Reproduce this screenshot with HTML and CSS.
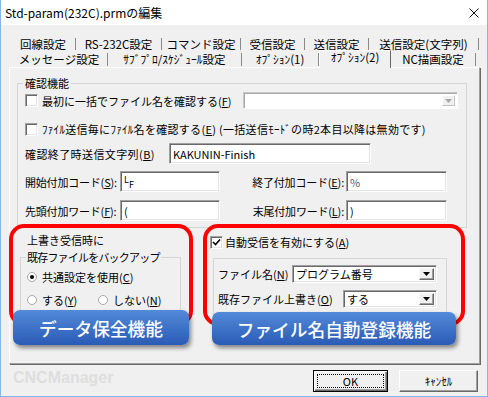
FILE: index.html
```html
<!DOCTYPE html>
<html lang="ja">
<head>
    <meta charset="UTF-8">
    <meta name="viewport" content="width=device-width, initial-scale=1.0">
    <title>Std-param(232C).prmの編集</title>
    <link rel="stylesheet" href="styles.css">
</head>
<body>
    <div class="window">
        <div class="titlebar">
            <span class="title">Std-param(232C).prmの編集</span>
            <svg class="close" width="10" height="10" viewBox="0 0 10 10"><path d="M0.5 0.5 L9.5 9.5 M9.5 0.5 L0.5 9.5" stroke="#111" stroke-width="1" fill="none"/></svg>
        </div>

        <div class="tabs">
            <div class="tab-row row1">
                <span class="tab">回線設定</span>
                <span class="tab">RS-232C設定</span>
                <span class="tab">コマンド設定</span>
                <span class="tab">受信設定</span>
                <span class="tab">送信設定</span>
                <span class="tab">送信設定(文字列)</span>
            </div>
            <div class="tab-row row2">
                <span class="tab">メッセージ設定</span>
                <span class="tab">ｻﾌﾞﾌﾟﾛ/ｽｹｼﾞｭｰﾙ設定</span>
                <span class="tab">ｵﾌﾟｼｮﾝ(1)</span>
                <span class="tab active">ｵﾌﾟｼｮﾝ(2)</span>
                <span class="tab">NC描画設定</span>
            </div>
        </div>

        <div class="panel">
            <fieldset class="group confirm">
                <legend>確認機能</legend>
                <div class="row r1">
                    <span class="check"></span>
                    <span class="text">最初に一括でファイル名を確認する(<u>F</u>)</span>
                    <div class="combo wide disabled">
                        <span class="combo-btn"><svg width="7" height="4" viewBox="0 0 7 4"><path d="M0 0 H7 L3.5 4 Z" fill="#a8a8a8"/></svg></span>
                    </div>
                </div>
                <div class="row r2">
                    <span class="check"></span>
                    <span class="text">ﾌｧｲﾙ送信毎にﾌｧｲﾙ名を確認する(<u>E</u>) (一括送信ﾓｰﾄﾞの時2本目以降は無効です)</span>
                </div>
                <div class="row r3">
                    <span class="label end-label">確認終了時送信文字列(<u>B</u>)</span>
                    <span class="field long">KAKUNIN-Finish</span>
                </div>
                <div class="pair-row r4">
                    <span class="label">開始付加コード(<u>S</u>):</span>
                    <span class="field"><span class="lf"><span class="lf-l">L</span><span class="lf-f">F</span></span></span>
                    <span class="label right">終了付加コード(<u>E</u>):</span>
                    <span class="field"><span class="pct">%</span></span>
                </div>
                <div class="pair-row r5">
                    <span class="label">先頭付加ワード(<u>F</u>):</span>
                    <span class="field">(</span>
                    <span class="label right">末尾付加ワード(<u>L</u>):</span>
                    <span class="field">)</span>
                </div>
            </fieldset>

            <div class="lower">
                <div class="callout left">
                    <div class="caption">上書き受信時に</div>
                    <fieldset class="group backup">
                        <legend>既存ファイルをバックアップ</legend>
                        <div class="radio-row first">
                            <span class="radio on"></span>
                            <span class="text">共通設定を使用(<u>C</u>)</span>
                        </div>
                        <div class="radio-row second">
                            <span class="radio-item">
                                <span class="radio"></span>
                                <span class="text">する(<u>Y</u>)</span>
                            </span>
                            <span class="radio-item">
                                <span class="radio"></span>
                                <span class="text">しない(<u>N</u>)</span>
                            </span>
                        </div>
                    </fieldset>
                    <div class="banner banner-left">データ保全機能</div>
                </div>

                <div class="callout right">
                    <div class="auto-row">
                        <span class="check checked"><svg width="9" height="8" viewBox="0 0 9 8"><path d="M1 4 L3.5 6.5 L8 1.5" stroke="#000" stroke-width="1.6" fill="none"/></svg></span>
                        <span class="text">自動受信を有効にする(<u>A</u>)</span>
                    </div>
                    <fieldset class="group auto">
                        <div class="combo-row">
                            <span class="text">ファイル名(<u>N</u>)</span>
                            <div class="combo name">
                                <span class="value">プログラム番号</span>
                                <span class="combo-btn"><svg width="7" height="4" viewBox="0 0 7 4"><path d="M0 0 H7 L3.5 4 Z" fill="#000"/></svg></span>
                            </div>
                        </div>
                        <div class="combo-row second">
                            <span class="text">既存ファイル上書き(<u>O</u>)</span>
                            <div class="combo over">
                                <span class="value">する</span>
                                <span class="combo-btn"><svg width="7" height="4" viewBox="0 0 7 4"><path d="M0 0 H7 L3.5 4 Z" fill="#000"/></svg></span>
                            </div>
                        </div>
                    </fieldset>
                    <div class="banner banner-right">ファイル名自動登録機能</div>
                </div>
            </div>
        </div>

        <div class="footer">
            <span class="brand">CNCManager</span>
            <button class="btn default" type="button">OK</button>
            <button class="btn" type="button">ｷｬﾝｾﾙ</button>
        </div>
    </div>
</body>
</html>
```

FILE: styles.css
```css
body {
    margin: 0;
    font-family: "Noto Sans CJK JP", "Noto Sans", sans-serif;
    font-size: 11px;
    line-height: 16px;
    color: #000;
    background: #fff;
}

.window {
    width: 488px;
    height: 397px;
    box-sizing: border-box;
    border: 1px solid #86b6e6;
    border-top: none;
    background: #f0f0f0;
    display: flex;
    flex-direction: column;
}

.titlebar {
    flex: none;
    height: 25px;
    background: #fff;
    display: flex;
    align-items: center;
    padding: 0 8px 0 4px;
    font-size: 12px;
}

.title {
    flex: 1;
}

/* tabs */
.tabs {
    flex: none;
    margin-top: 11px;
    padding-left: 10px;
    font-size: 11.5px;
}

.tab-row {
    display: grid;
}

.row1 {
    grid-template-columns: 65px 86px 79px 64px 64px 110px;
    height: 15px;
}

.row2 {
    grid-template-columns: 97px 134px 77px 72px 85px;
    height: 16px;
}

.tab {
    margin: 2px 0 1px;
    border-right: 1px solid #8a8a8a;
    text-align: center;
    white-space: nowrap;
    line-height: 12px;
}

.row2 .tab {
    line-height: 13px;
}

.row2 .tab.active {
    margin: -1px 0 -1px;
    background: #f0f0f0;
    border-left: 1px solid #fff;
    border-top: 1px solid #fff;
    border-right: 1px solid #696969;
    position: relative;
    z-index: 1;
    line-height: 13px;
}

/* panel */
.panel {
    flex: none;
    width: 471px;
    height: 297px;
    box-sizing: border-box;
    margin-left: 8px;
    border: 1px solid;
    border-color: #fff #a0a0a0 #a0a0a0 #fff;
    box-shadow: 1px 1px 0 #696969;
    padding: 7px 0 0 7px;
}

.group {
    margin: 0;
    min-width: 0;
    box-sizing: border-box;
    border: 1px solid #d5d5d5;
}

.group legend {
    padding: 0 2px;
    line-height: 16px;
    white-space: nowrap;
}

.confirm {
    width: 450px;
    padding: 0 8px 6px 7px;
}

.confirm legend {
    margin-left: -2px;
}

.row {
    display: flex;
    align-items: center;
}

.r1 {
    margin-top: 1px;
    height: 17px;
}

.r2 {
    margin-top: 11px;
    height: 18px;
}

.r2 .text {
    letter-spacing: 0.3px;
}

.r3 {
    margin-top: 5px;
    height: 21px;
}

.check {
    flex: none;
    width: 13px;
    height: 13px;
    box-sizing: border-box;
    background: #fff;
    border: 1px solid;
    border-color: #a0a0a0 #fff #fff #a0a0a0;
    box-shadow: inset 1px 1px 0 #696969, inset -1px -1px 0 #e3e3e3;
    display: flex;
    align-items: center;
    justify-content: center;
}

.row .text {
    margin-left: 4px;
    white-space: nowrap;
}

.end-label {
    width: 144px;
    letter-spacing: 0.4px;
}

.field {
    height: 21px;
    box-sizing: border-box;
    background: #fff;
    border: 1px solid;
    border-color: #a0a0a0 #fff #fff #a0a0a0;
    box-shadow: inset 1px 1px 0 #696969, inset -1px -1px 0 #e3e3e3;
    padding-left: 3px;
    display: flex;
    align-items: center;
    white-space: nowrap;
}

.long {
    width: 202px;
}

.pair-row {
    display: grid;
    grid-template-columns: 95px 100px 1fr 101px;
    align-items: center;
    padding-right: 11px;
    height: 21px;
}

.r4 {
    margin-top: 7px;
}

.r5 {
    margin-top: 8px;
}

.label {
    white-space: nowrap;
}

.pair-row .label {
    letter-spacing: -0.2px;
}

.label.right {
    justify-self: end;
    margin-right: 2px;
}

.lf {
    display: inline-flex;
    font-size: 9px;
    line-height: 9px;
    height: 14px;
}

.lf-l {
    align-self: flex-start;
}

.lf-f {
    align-self: flex-end;
}

.pct {
    color: #4a5a78;
}

/* combo boxes */
.combo {
    flex: none;
    box-sizing: border-box;
    background: #fff;
    border: 1px solid;
    border-color: #a0a0a0 #fff #fff #a0a0a0;
    box-shadow: inset 1px 1px 0 #696969, inset -1px -1px 0 #e3e3e3;
    display: flex;
    align-items: center;
    padding: 2px 2px 2px 3px;
}

.combo.wide {
    width: 215px;
    height: 17px;
    margin-left: auto;
}

.combo.disabled {
    border-color: #c8c8c8 #fff #fff #c8c8c8;
    box-shadow: inset 1px 1px 0 #a8a8a8;
}

.combo .value {
    flex: 1;
    white-space: nowrap;
}

.combo-btn {
    margin-left: auto;
    width: 15px;
    height: 100%;
    box-sizing: border-box;
    background: #f0f0f0;
    border: 1px solid;
    border-color: #f8f8f8 #696969 #696969 #f8f8f8;
    box-shadow: inset -1px -1px 0 #a0a0a0;
    display: flex;
    align-items: center;
    justify-content: center;
}

.disabled .combo-btn {
    width: 13px;
    border-color: #fff #c0c0c0 #c0c0c0 #fff;
    box-shadow: none;
}

/* annotated area */
.lower {
    display: flex;
    gap: 10px;
    margin: -4px 0 0 -8px;
}

.callout {
    position: relative;
    height: 102px;
    box-sizing: border-box;
    border: 4px solid #ff0000;
    border-radius: 15px;
}

.callout.left {
    width: 184px;
    padding: 4px 0 0 7px;
}

.callout.right {
    width: 262px;
    padding: 6px 0 0 3px;
}

.caption {
    padding-left: 7px;
}

.backup {
    width: 161px;
    height: 70px;
    margin-top: 1px;
    padding: 0 5px;
}

.backup legend {
    padding: 0 1px;
    letter-spacing: -0.8px;
}

.radio-row {
    display: flex;
    align-items: center;
    height: 16px;
    padding-left: 1px;
}

.radio-row.first {
    margin-top: 4px;
}

.radio-row.second {
    margin-top: 7px;
}

.radio-item {
    display: flex;
    align-items: center;
}

.radio-item:first-child {
    width: 71px;
}

.radio {
    flex: none;
    width: 10px;
    height: 10px;
    box-sizing: border-box;
    border-radius: 50%;
    background: #fff;
    border: 1px solid #a8a8a8;
    display: flex;
    align-items: center;
    justify-content: center;
}

.radio.on::after {
    content: "";
    width: 4px;
    height: 4px;
    border-radius: 50%;
    background: #000;
}

.radio-row .text {
    margin-left: 5px;
    white-space: nowrap;
}

.auto-row {
    display: flex;
    align-items: center;
    height: 16px;
}

.auto-row .text {
    margin-left: 2px;
}

.auto {
    width: 234px;
    height: 60px;
    margin: 8px 0 0 3px;
    padding: 6px 9px 0 4px;
}

.combo-row {
    display: flex;
    align-items: center;
    justify-content: space-between;
    height: 18px;
}

.combo-row.second {
    margin-top: 7px;
}

.combo-row .combo {
    height: 18px;
}

.combo.name {
    width: 145px;
}

.combo.over {
    width: 94px;
}

.banner {
    position: absolute;
    display: flex;
    align-items: center;
    justify-content: center;
    color: #fff;
    font-size: 17.7px;
    font-weight: 500;
    border-radius: 7px;
    background: linear-gradient(#538ad9, #2a5bb6);
    box-shadow: 2px 3px 4px rgba(0, 0, 0, 0.45);
    white-space: nowrap;
}

.banner-left {
    left: 0;
    top: 82px;
    width: 176px;
    height: 35px;
}

.banner-right {
    left: 5px;
    top: 84px;
    width: 244px;
    height: 33px;
}

/* footer */
.footer {
    flex: 1;
    display: flex;
    align-items: flex-start;
    padding: 6px 9px 0 12px;
}

.brand {
    font-family: "Liberation Sans", Arial, sans-serif;
    font-weight: bold;
    font-size: 16px;
    line-height: 16px;
    color: #dedede;
}

.btn {
    height: 22px;
    box-sizing: border-box;
    margin: 0;
    padding: 0;
    font-family: "Noto Sans CJK JP", sans-serif;
    font-size: 11px;
    background: #f0f0f0;
    border: 1px solid;
    border-color: #fff #696969 #696969 #fff;
    box-shadow: inset -1px -1px 0 #a0a0a0;
    width: 79px;
    margin-left: 11px;
}

.btn.default {
    position: relative;
    width: 75px;
    margin-left: auto;
    border: 1px solid #000;
    box-shadow: inset 1px 1px 0 #fff, inset -1px -1px 0 #696969, inset -2px -2px 0 #a0a0a0;
}

.btn.default::after {
    content: "";
    position: absolute;
    inset: 3px;
    border: 1px dotted #000;
}
```
